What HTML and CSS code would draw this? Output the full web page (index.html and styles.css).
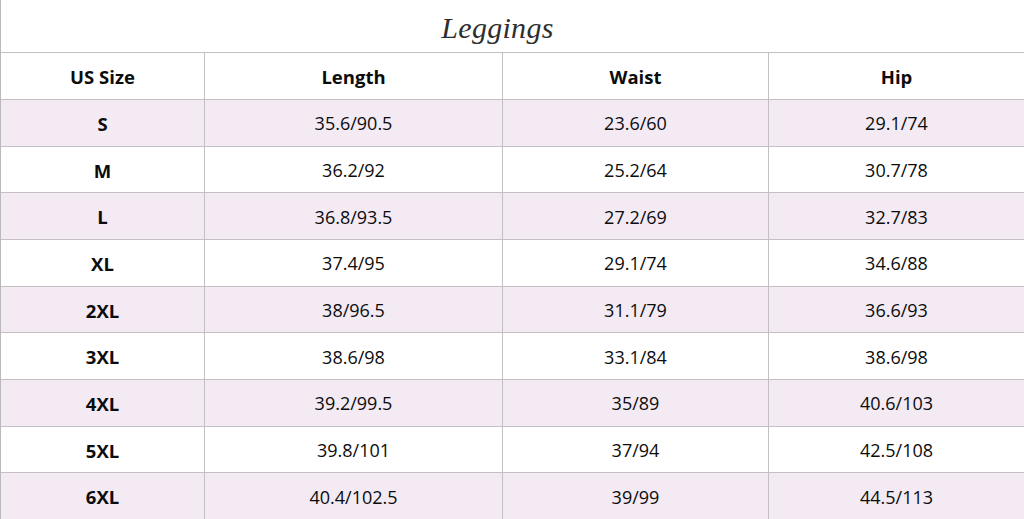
FILE: index.html
```html
<!DOCTYPE html>
<html lang="en">
<head>
<meta charset="utf-8">
<title>Leggings Size Chart</title>
<link rel="stylesheet" href="styles.css">
</head>
<body>
<div class="page">
  <h1 class="title">Leggings</h1>
  <div class="table">
    <div class="row head">
      <div class="cell">US Size</div><div class="cell">Length</div><div class="cell">Waist</div><div class="cell">Hip</div>
    </div>
    <div class="row alt">
      <div class="cell size">S</div><div class="cell">35.6/90.5</div><div class="cell">23.6/60</div><div class="cell">29.1/74</div>
    </div>
    <div class="row">
      <div class="cell size">M</div><div class="cell">36.2/92</div><div class="cell">25.2/64</div><div class="cell">30.7/78</div>
    </div>
    <div class="row alt">
      <div class="cell size">L</div><div class="cell">36.8/93.5</div><div class="cell">27.2/69</div><div class="cell">32.7/83</div>
    </div>
    <div class="row">
      <div class="cell size">XL</div><div class="cell">37.4/95</div><div class="cell">29.1/74</div><div class="cell">34.6/88</div>
    </div>
    <div class="row alt">
      <div class="cell size">2XL</div><div class="cell">38/96.5</div><div class="cell">31.1/79</div><div class="cell">36.6/93</div>
    </div>
    <div class="row">
      <div class="cell size">3XL</div><div class="cell">38.6/98</div><div class="cell">33.1/84</div><div class="cell">38.6/98</div>
    </div>
    <div class="row alt">
      <div class="cell size">4XL</div><div class="cell">39.2/99.5</div><div class="cell">35/89</div><div class="cell">40.6/103</div>
    </div>
    <div class="row">
      <div class="cell size">5XL</div><div class="cell">39.8/101</div><div class="cell">37/94</div><div class="cell">42.5/108</div>
    </div>
    <div class="row alt">
      <div class="cell size">6XL</div><div class="cell">40.4/102.5</div><div class="cell">39/99</div><div class="cell">44.5/113</div>
    </div>
  </div>
</div>
</body>
</html>
```

FILE: styles.css
```css
* { box-sizing: border-box; }
html, body { margin: 0; padding: 0; background: #fff; }
body {
  font-family: "Open Sans", "Noto Sans", sans-serif;
  color: #0c0c0c;
  overflow: hidden;
}
.page {
  width: 1024px;
  height: 519px;
  border-left: 1px solid #b9b9b9;
  display: flex;
  flex-direction: column;
}
.title {
  margin: 0;
  height: 52px;
  flex: none;
  display: flex;
  align-items: center;
  justify-content: center;
  padding: 4px 30px 0 0;
  font-family: "Liberation Serif", serif;
  font-style: italic;
  font-weight: normal;
  font-size: 30px;
  color: #2e2e2e;
  letter-spacing: 0.3px;
}
.table {
  flex: 1;
  display: flex;
  flex-direction: column;
}
.row {
  display: grid;
  grid-template-columns: 203px 298px 266px 256px;
  flex: 1;
  border-top: 1px solid #c2c0c3;
}
.row.head {
  flex: none;
  height: 47px;
  font-weight: 700;
}
.row.alt { background: #f3eaf4; }
.cell {
  display: flex;
  align-items: center;
  justify-content: center;
  font-size: 18px;
  padding-top: 1px;
}
.row.head .cell { font-size: 18.5px; }
.cell + .cell { border-left: 1px solid #c2c0c3; }
.cell.size { font-weight: 700; font-size: 18.5px; }
```
